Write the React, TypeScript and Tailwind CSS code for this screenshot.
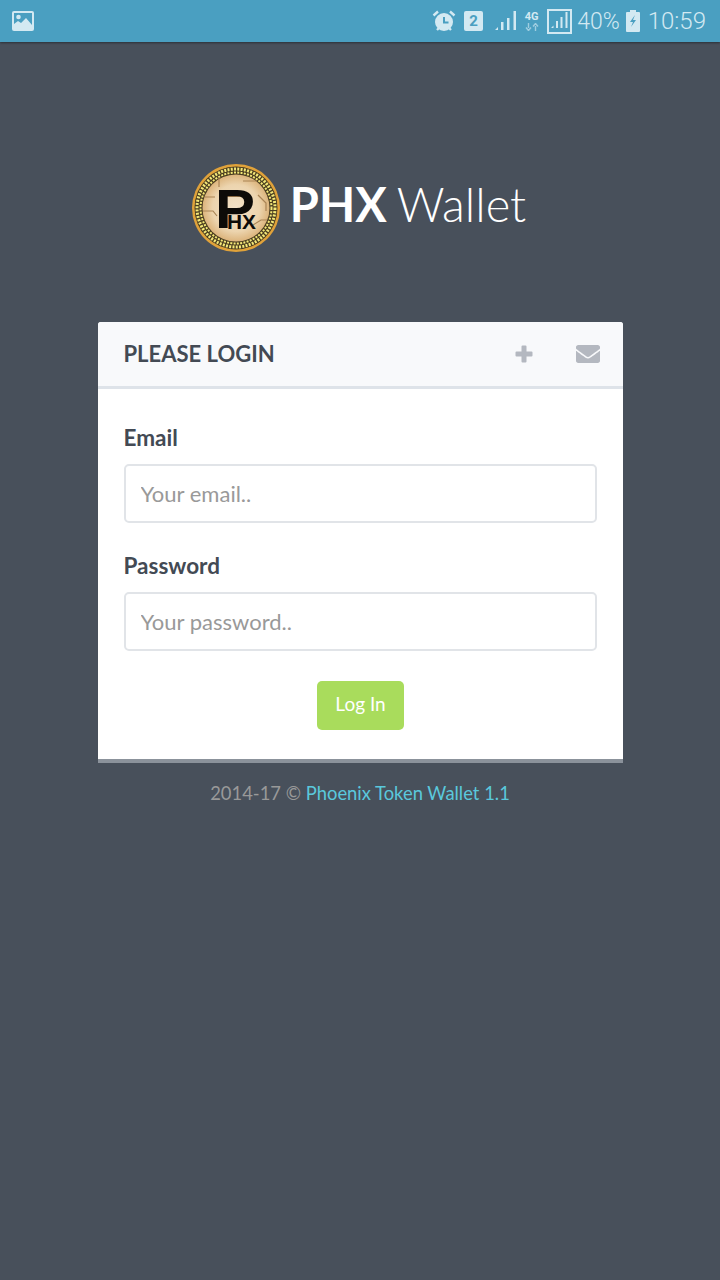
import { FaEnvelope } from 'react-icons/fa'

const CoinLogo = () => (
  <svg width="90" height="90" viewBox="0 0 90 90" className="shrink-0">
    <defs>
      <radialGradient id="coinFace" cx="50%" cy="50%" r="50%">
        <stop offset="0%" stopColor="#f3e2c8" />
        <stop offset="70%" stopColor="#ecd4ae" />
        <stop offset="100%" stopColor="#dcb47c" />
      </radialGradient>
    </defs>
    <circle cx="45" cy="45" r="44" fill="#e0a23a" />
    <circle cx="45" cy="45" r="41.500" fill="#4a3d20" />
    <circle cx="45" cy="45" r="39" fill="none" stroke="#f4e878" strokeWidth="3" strokeDasharray="2 1.300" />
    <circle cx="45" cy="45" r="35.500" fill="none" stroke="#f4e878" strokeWidth="2" strokeDasharray="2 1.300" />
    <circle cx="45" cy="45" r="33.500" fill="url(#coinFace)" />
    <path d="M12 48h10l4 5M67 32l8 8v8M62 62l8-5h6M28 14v10M52 18h14M14 34h10" fill="none" stroke="#a98455" strokeWidth="1.200" />
    <rect x="35" y="30" width="18" height="4" fill="#b98d56" />
    <text x="24" y="65" fontFamily="'Liberation Sans', sans-serif" fontWeight="700" fontSize="55" fill="#0d0b08" textLength="40" lengthAdjust="spacingAndGlyphs">P</text>
    <text x="36" y="66" fontFamily="'Liberation Sans', sans-serif" fontWeight="700" fontSize="21" fill="#0d0b08" textLength="29" lengthAdjust="spacingAndGlyphs">HX</text>
  </svg>
)

const StatusIcons = () => (
  <div className="flex items-center text-[#d3e9f2]">
    {/* alarm */}
    <svg width="24" height="24" viewBox="0 0 24 24" className="mr-[8px]">
      <circle cx="12" cy="13" r="9" fill="#d3e9f2" />
      <path d="M1.500 6.500 6 2.500M22.500 6.500 18 2.500M5 21l2-2M19 21l-2-2" stroke="#d3e9f2" strokeWidth="2.400" fill="none" />
      <path d="M12 8v5.500h4.500" stroke="#4a9fc1" strokeWidth="2" fill="none" />
    </svg>
    {/* sim 2 */}
    <div className="mr-[11px] flex h-[20px] w-[19px] items-center justify-center rounded-[2px] bg-[#d3e9f2] font-['Roboto',sans-serif] text-[15px] font-bold text-[#4a9fc1]">
      2
    </div>
    {/* signal 1 */}
    <svg width="24" height="24" viewBox="0 0 24 24" className="mr-[5px]">
      <path d="M1 21h3v-3zM7 21h2.500v-8H7zM13 21h2.500V9H13zM19.500 21H22V2h-2.500z" fill="#d3e9f2" />
    </svg>
    {/* 4G */}
    <div className="mr-[7px] flex w-[17px] flex-col items-center">
      <span className="font-['Roboto',sans-serif] text-[11px] font-bold leading-[11px]">4G</span>
      <svg width="14" height="8" viewBox="0 0 14 8" className="mt-[1px]">
        <path d="M3.500 0v5M1 4.500l2.500 3 2.500-3M10.500 8V3M8 3.500 10.500.5 13 3.500" stroke="#9fcde0" strokeWidth="1.400" fill="none" />
      </svg>
    </div>
    {/* signal 2 boxed */}
    <div className="mr-[5px] flex h-[25px] w-[25px] items-end justify-center border-2 border-[#d3e9f2] pb-[2px]">
      <svg width="19" height="19" viewBox="0 0 19 19">
        <path d="M1 17h2.500v-2.500zM6 17h2v-7H6zM10.500 17h2V6h-2zM15.500 17h2V1h-2z" fill="#d3e9f2" />
      </svg>
    </div>
    <span className="mr-[6px] font-['Roboto',sans-serif] text-[23px] font-light leading-none">40%</span>
    {/* battery */}
    <svg width="14" height="22" viewBox="0 0 14 22" className="mr-[8px]">
      <path d="M4 0h6v2h3a1 1 0 0 1 1 1v18a1 1 0 0 1-1 1H1a1 1 0 0 1-1-1V3a1 1 0 0 1 1-1h3z" fill="#d3e9f2" />
      <path d="M9 5 4 12h3l-2 5 5-7H7z" fill="#4a9fc1" />
    </svg>
    <span className="font-['Roboto',sans-serif] text-[24px] font-light leading-none">10:59</span>
  </div>
)

export default function App() {
  return (
    <div className="min-h-[1280px] bg-[#48505b] font-['Lato',sans-serif]">
      <div className="flex h-[42px] items-center justify-between bg-[#4a9fc1] pl-[12px] pr-[14px] shadow-[0_1px_2px_rgba(0,0,0,0.4)]">
        <svg width="22" height="20" viewBox="0 0 22 20">
          <rect width="22" height="20" rx="2" fill="#d3e9f2" />
          <rect x="2" y="2" width="18" height="14" fill="#4a9fc1" />
          <circle cx="6.500" cy="6" r="2.300" fill="#d3e9f2" />
          <path d="M2 16v-3l4-3 3 2 5-5 6 7v2z" fill="#d3e9f2" />
        </svg>
        <StatusIcons />
      </div>

      {/* Logo */}
      <div className="mt-[121px] mr-[3px] flex items-center justify-center gap-[9px]">
        <CoinLogo />
        <h1 className="mb-[8px] flex gap-[10px] text-[47px] leading-[58px] text-white">
          <span className="font-bold">PHX</span>
          <span className="font-light">Wallet</span>
        </h1>
      </div>

      {/* Login card */}
      <div className="mx-auto mt-[69px] w-[525px] rounded-t-[3px] border-b-[4px] border-[#8b929b] bg-white">
        <div className="flex h-[67px] items-center justify-between rounded-t-[3px] border-b-[3px] border-[#dee3e9] bg-[#f8f9fb] pl-[26px] pr-[23px]">
          <h2 className="mb-[1px] text-[22px] font-bold text-[#434a54]">PLEASE LOGIN</h2>
          <div className="flex items-center gap-[43px] text-[#b4b8c0]">
            <svg width="18" height="18" viewBox="0 0 18 18">
              <path d="M6.500 1.500a1 1 0 0 1 1-1h3a1 1 0 0 1 1 1v5h5a1 1 0 0 1 1 1v3a1 1 0 0 1-1 1h-5v5a1 1 0 0 1-1 1h-3a1 1 0 0 1-1-1v-5h-5a1 1 0 0 1-1-1v-3a1 1 0 0 1 1-1h5z" fill="currentColor" />
            </svg>
            <FaEnvelope className="h-[24px] w-[24px]" />
          </div>
        </div>
        <form className="flex flex-col px-[26px] pt-[34px] pb-[29px]">
          <label className="mb-[11px] text-[22.500px] font-bold leading-[30px] text-[#434a54]">Email</label>
          <input
            placeholder="Your email.."
            className="mb-[28px] h-[59px] w-full rounded-[5px] border-2 border-[#e1e4e8] px-[15px] text-[22px] placeholder:text-[#999999]"
          />
          <label className="mb-[11px] text-[22.500px] font-bold leading-[30px] text-[#434a54]">Password</label>
          <input
            placeholder="Your password.."
            className="h-[59px] w-full rounded-[5px] border-2 border-[#e1e4e8] px-[15px] text-[22px] placeholder:text-[#999999]"
          />
          <button
            type="button"
            className="mx-auto mt-[30px] h-[49px] w-[87px] rounded-[5px] bg-[#a9dc5c] pb-[2px] pl-[1px] text-[19px] text-white"
          >
            Log In
          </button>
        </form>
      </div>

      <p className="mt-[18px] text-center text-[18.400px] leading-[24px] text-[#999999]">
        2014-17 © <span className="text-[#5ac8dc]">Phoenix Token Wallet 1.1</span>
      </p>
    </div>
  )
}
